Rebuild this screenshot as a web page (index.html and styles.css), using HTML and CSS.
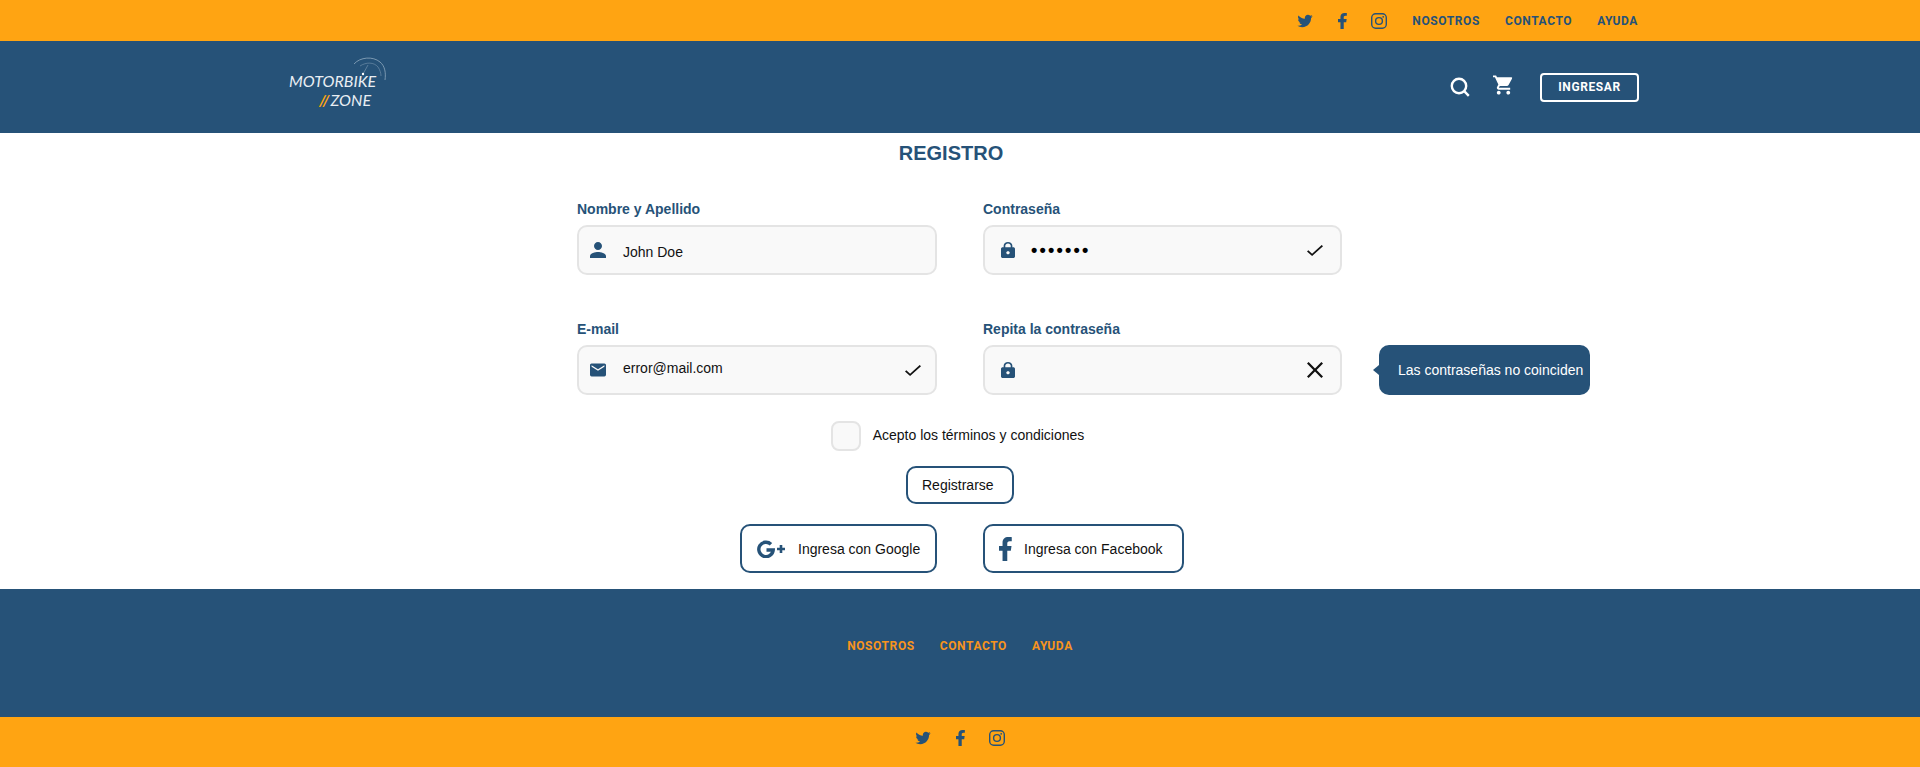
FILE: index.html
```html
<!DOCTYPE html>
<html lang="es">
<head>
    <meta charset="UTF-8">
    <meta name="viewport" content="width=device-width, initial-scale=1.0">
    <title>Motorbike Zone - Registro</title>
    <link rel="stylesheet" href="styles.css">
</head>
<body>
    <svg class="sprites" width="0" height="0">
        <symbol id="twitter" viewBox="1 3 22 19"><path d="M22.46 6c-.77.35-1.6.58-2.46.69.88-.53 1.56-1.37 1.88-2.38-.83.5-1.75.85-2.72 1.05C18.37 4.5 17.26 4 16 4c-2.35 0-4.27 1.92-4.27 4.29 0 .34.04.67.11.98C8.28 9.09 5.11 7.38 3 4.79c-.37.63-.58 1.37-.58 2.15 0 1.49.75 2.81 1.91 3.56-.71 0-1.37-.2-1.95-.5v.03c0 2.08 1.48 3.82 3.44 4.21a4.22 4.22 0 0 1-1.93.07 4.28 4.28 0 0 0 4 2.98 8.521 8.521 0 0 1-5.33 1.84c-.34 0-.68-.02-1.02-.06C3.44 20.29 5.7 21 8.12 21 16 21 20.33 14.46 20.33 8.79c0-.19 0-.37-.01-.56.84-.6 1.56-1.36 2.14-2.23z"/></symbol>
        <symbol id="facebook" viewBox="7 2 11 20" preserveAspectRatio="none"><path d="M14 13.5h3l.6-4H14v-2c0-1.03.4-2 2-2h1.8V2.14C17.47 2.1 16.24 2 14.94 2 11.93 2 10 3.66 10 6.7v2.8H7v4h3V22h4v-8.5z"/></symbol>
        <symbol id="instagram" viewBox="0 0 16 16"><rect x=".7" y=".7" width="14.6" height="14.6" rx="4" fill="none" stroke="currentColor" stroke-width="1.4"/><circle cx="8" cy="8" r="3.4" fill="none" stroke="currentColor" stroke-width="1.4"/><circle cx="12.2" cy="3.8" r=".9"/></symbol>
        <symbol id="check" viewBox="3.4 5.6 17.6 13.4" preserveAspectRatio="none"><path d="M9 16.17 4.83 12l-1.42 1.41L9 19 21 7l-1.41-1.41z"/></symbol>
        <symbol id="lock" viewBox="4 1 16 21" preserveAspectRatio="none"><path d="M18 8h-1V6c0-2.76-2.24-5-5-5S7 3.24 7 6v2H6c-1.1 0-2 .9-2 2v10c0 1.1.9 2 2 2h12c1.1 0 2-.9 2-2V10c0-1.1-.9-2-2-2zm-6 9c-1.1 0-2-.9-2-2s.9-2 2-2 2 .9 2 2-.9 2-2 2zm3.1-9H8.9V6c0-1.71 1.39-3.1 3.1-3.1 1.71 0 3.1 1.39 3.1 3.1v2z"/></symbol>
    </svg>

    <div class="topbar">
        <div class="social">
            <svg class="ico-tw"><use href="#twitter"/></svg>
            <svg class="ico-fb"><use href="#facebook"/></svg>
            <svg class="ico-ig"><use href="#instagram"/></svg>
        </div>
        <nav class="toplinks">
            <a>NOSOTROS</a>
            <a>CONTACTO</a>
            <a>AYUDA</a>
        </nav>
    </div>

    <header class="header">
        <div class="logo">
            <svg class="logo-arc" viewBox="0 0 34 28">
                <path d="M1 8C7 1 20 0 27 6c5 4 6 11 5 18" fill="none" stroke="#8fa9bf" stroke-width=".8"/>
                <path d="M7 10c6-4 14-4 18 1 2 3 3 6 3 9" fill="none" stroke="#6d8ca8" stroke-width=".7"/>
                <path d="M10 18 15 9" stroke="#8fa9bf" stroke-width=".5"/>
                <circle cx="10" cy="18" r="1.2" fill="#fff"/>
            </svg>
            <div class="logo-top">MOTORBIKE</div>
            <div class="logo-bottom"><span class="logo-slash">//</span>ZONE</div>
        </div>
        <div class="header-actions">
            <svg class="ico-search" viewBox="0 0 20 20"><circle cx="9" cy="9" r="7.2" fill="none" stroke="#fff" stroke-width="2.4"/><path d="m14.2 14.2 4.6 4.6" stroke="#fff" stroke-width="2.4"/></svg>
            <svg class="ico-cart" viewBox="1 2 22 20"><path d="M7 18c-1.1 0-1.99.9-1.99 2S5.9 22 7 22s2-.9 2-2-.9-2-2-2zM1 2v2h2l3.6 7.59-1.35 2.45c-.16.28-.25.61-.25.96 0 1.1.9 2 2 2h12v-2H7.42c-.14 0-.25-.11-.25-.25l.03-.12.9-1.63h7.45c.75 0 1.41-.41 1.75-1.03l3.58-6.49A1 1 0 0 0 20 4H5.21l-.94-2H1zm16 16c-1.1 0-1.99.9-1.99 2s.89 2 1.99 2 2-.9 2-2-.9-2-2-2z"/></svg>
            <a class="btn-login">INGRESAR</a>
        </div>
    </header>

    <main class="main">
        <h1 class="title">REGISTRO</h1>
        <form class="form-grid">
            <div class="field">
                <label>Nombre y Apellido</label>
                <div class="input">
                    <svg class="ico-lead" viewBox="4 4 16 16"><path d="M12 12c2.21 0 4-1.79 4-4s-1.79-4-4-4-4 1.79-4 4 1.79 4 4 4zm0 2c-2.67 0-8 1.34-8 4v2h16v-2c0-2.66-5.33-4-8-4z"/></svg>
                    <span class="value value-down">John Doe</span>
                </div>
            </div>
            <div class="field">
                <label>Contraseña</label>
                <div class="input">
                    <svg class="ico-lock"><use href="#lock"/></svg>
                    <span class="value dots">•••••••</span>
                    <svg class="ico-trail"><use href="#check"/></svg>
                </div>
            </div>
            <div class="field">
                <label>E-mail</label>
                <div class="input">
                    <svg class="ico-lead" viewBox="2 4 20 16"><path d="M20 4H4c-1.1 0-1.99.9-1.99 2L2 18c0 1.1.9 2 2 2h16c1.1 0 2-.9 2-2V6c0-1.1-.9-2-2-2zm0 4-8 5-8-5V6l8 5 8-5v2z"/></svg>
                    <span class="value value-up">error@mail.com</span>
                    <svg class="ico-trail"><use href="#check"/></svg>
                </div>
            </div>
            <div class="field">
                <label>Repita la contraseña</label>
                <div class="input">
                    <svg class="ico-lock"><use href="#lock"/></svg>
                    <span class="value"></span>
                    <svg class="ico-close" viewBox="5 5 14 14"><path d="M19 6.41 17.59 5 12 10.59 6.41 5 5 6.41 10.59 12 5 17.59 6.41 19 12 13.41 17.59 19 19 17.59 13.41 12z"/></svg>
                </div>
                <div class="tooltip">Las contraseñas no coinciden</div>
            </div>
        </form>

        <div class="terms">
            <span class="checkbox"></span>
            <span class="terms-text">Acepto los términos y condiciones</span>
        </div>

        <button type="button" class="btn btn-submit">Registrarse</button>

        <div class="socials">
            <a class="btn btn-google">
                <svg viewBox="0 0 28 18"><path d="M14 4.2A7.2 7.2 0 1 0 16.2 10H9.5" fill="none" stroke="#265278" stroke-width="3.4"/><path d="M20 9h8M24 5v8" stroke="#265278" stroke-width="2.6"/></svg>
                Ingresa con Google
            </a>
            <a class="btn btn-facebook">
                <svg><use href="#facebook"/></svg>
                Ingresa con Facebook
            </a>
        </div>
    </main>

    <footer class="footer">
        <nav class="footlinks">
            <a>NOSOTROS</a>
            <a>CONTACTO</a>
            <a>AYUDA</a>
        </nav>
    </footer>
    <div class="bottombar">
        <div class="social">
            <svg class="ico-tw"><use href="#twitter"/></svg>
            <svg class="ico-fb"><use href="#facebook"/></svg>
            <svg class="ico-ig"><use href="#instagram"/></svg>
        </div>
    </div>
</body>
</html>
```

FILE: styles.css
```css
body {
    margin: 0;
    font-family: "Liberation Sans", Arial, sans-serif;
    font-size: 14px;
    color: #111;
    background: #fff;
}

.sprites {
    position: absolute;
}

/* barras naranjas */
.topbar {
    height: 41px;
    background: #ffa412;
    display: flex;
    justify-content: flex-end;
    align-items: center;
    padding-right: 282px;
}
.bottombar {
    height: 50px;
    background: #ffa412;
    display: flex;
    justify-content: center;
    align-items: flex-start;
    padding-top: 13px;
    box-sizing: border-box;
}

.social {
    display: flex;
    align-items: center;
    color: #265278;
    fill: currentColor;
}
.ico-tw {
    width: 16px;
    height: 14px;
}
.ico-fb {
    width: 9px;
    height: 16px;
    margin-left: 25px;
}
.ico-ig {
    width: 16px;
    height: 16px;
    margin-left: 24px;
}

.toplinks, .footlinks {
    display: flex;
    gap: 25px;
    font-family: "Roboto", sans-serif;
    font-size: 12px;
    font-weight: 700;
    letter-spacing: .6px;
}
.toplinks {
    margin-left: 25px;
    color: #265278;
}

/* cabecera */
.header {
    height: 92px;
    background: #265278;
    display: flex;
    justify-content: space-between;
    align-items: center;
    padding: 0 281px 0 289px;
}
.logo {
    position: relative;
    top: 3px;
    color: #e9eef3;
    font-family: "Lato", sans-serif;
    font-style: italic;
    font-size: 16px;
    line-height: 19px;
    width: 100px;
}
.logo-arc {
    position: absolute;
    left: 64px;
    top: -15px;
    width: 34px;
    height: 28px;
}
.logo-bottom {
    padding-left: 30px;
}
.logo-slash {
    color: #ffa412;
    font-weight: 700;
    margin-right: 1px;
}

.header-actions {
    display: flex;
    align-items: center;
}
.ico-search {
    width: 20px;
    height: 20px;
}
.ico-cart {
    width: 21px;
    height: 20px;
    margin: -4px 0 0 23px;
    fill: #fff;
}
.btn-login {
    width: 99px;
    height: 29px;
    margin-left: 26px;
    box-sizing: border-box;
    border: 2px solid #fff;
    border-radius: 4px;
    color: #fff;
    font-family: "Roboto", sans-serif;
    font-size: 12px;
    font-weight: 700;
    letter-spacing: .6px;
    display: flex;
    align-items: center;
    justify-content: center;
}

/* formulario */
.main {
    height: 456px;
    box-sizing: border-box;
    display: flex;
    flex-direction: column;
    align-items: center;
    padding-left: 2px;
}
.title {
    margin: 9px 0 0 -20px;
    font-size: 20px;
    line-height: 23px;
    color: #265278;
}
.form-grid {
    display: grid;
    grid-template-columns: 360px 359px;
    column-gap: 46px;
    row-gap: 46px;
    margin: 36px 0 0 -3px;
}
.field {
    position: relative;
}
.field label {
    display: block;
    height: 16px;
    line-height: 16px;
    margin-bottom: 8px;
    font-size: 14px;
    font-weight: 700;
    color: #265278;
}
.input {
    height: 50px;
    box-sizing: border-box;
    border: 2px solid #e4e4e4;
    border-radius: 10px;
    background: #f9f9f9;
    display: flex;
    align-items: center;
    padding: 0 14px 0 11px;
    fill: #265278;
}
.ico-lead {
    width: 16px;
    height: 16px;
    flex: none;
}
.ico-lock {
    width: 14px;
    height: 16px;
    margin-left: 5px;
    flex: none;
}
.value {
    margin-left: 17px;
    flex: 1;
}
.value-down {
    margin-top: 4px;
}
.value-up {
    margin-top: -4px;
}
.dots {
    margin-left: 16px;
    font-size: 18px;
    font-weight: 700;
    color: #000;
    letter-spacing: 2.2px;
}
.ico-trail {
    width: 16px;
    height: 11px;
    flex: none;
    fill: #111;
}
.field:nth-child(even) .ico-trail {
    margin-right: 3px;
}
.ico-close {
    width: 16px;
    height: 16px;
    margin-right: 3px;
    flex: none;
    fill: #111;
}
.tooltip {
    position: absolute;
    left: 396px;
    top: 24px;
    width: 211px;
    height: 50px;
    box-sizing: border-box;
    padding-left: 19px;
    border-radius: 10px;
    background: #265278;
    color: #fff;
    line-height: 50px;
    white-space: nowrap;
}
.tooltip::before {
    content: "";
    position: absolute;
    left: -6px;
    top: 20px;
    border: 5px solid transparent;
    border-left: 0;
    border-right: 6px solid #265278;
}

.terms {
    display: flex;
    align-items: center;
    gap: 12px;
    margin: 26px 0 0 -7px;
}
.terms-text {
    margin-top: -2px;
}
.checkbox {
    width: 30px;
    height: 30px;
    box-sizing: border-box;
    border: 2px solid #e4e4e4;
    border-radius: 8px;
    background: #f9f9f9;
}

.btn {
    box-sizing: border-box;
    border: 2px solid #265278;
    border-radius: 10px;
    background: #fff;
    color: #111;
    font-family: inherit;
    font-size: 14px;
    display: flex;
    align-items: center;
}
.btn-submit {
    width: 108px;
    height: 38px;
    margin: 15px 0 0 -2px;
    padding: 0 0 0 14px;
}
.socials {
    display: flex;
    gap: 46px;
    margin: 20px 0 0 2px;
}
.btn-google {
    width: 197px;
    height: 49px;
    padding-left: 15px;
}
.btn-google svg {
    width: 28px;
    height: 18px;
    margin-right: 13px;
}
.btn-facebook {
    width: 201px;
    height: 49px;
    padding-left: 14px;
}
.btn-facebook svg {
    width: 13px;
    height: 24px;
    margin-right: 12px;
    fill: #265278;
}

/* pie */
.footer {
    height: 128px;
    background: #265278;
    display: flex;
    justify-content: center;
    padding-top: 50px;
    box-sizing: border-box;
}
.footlinks {
    color: #f7941d;
    height: 15px;
}
```
